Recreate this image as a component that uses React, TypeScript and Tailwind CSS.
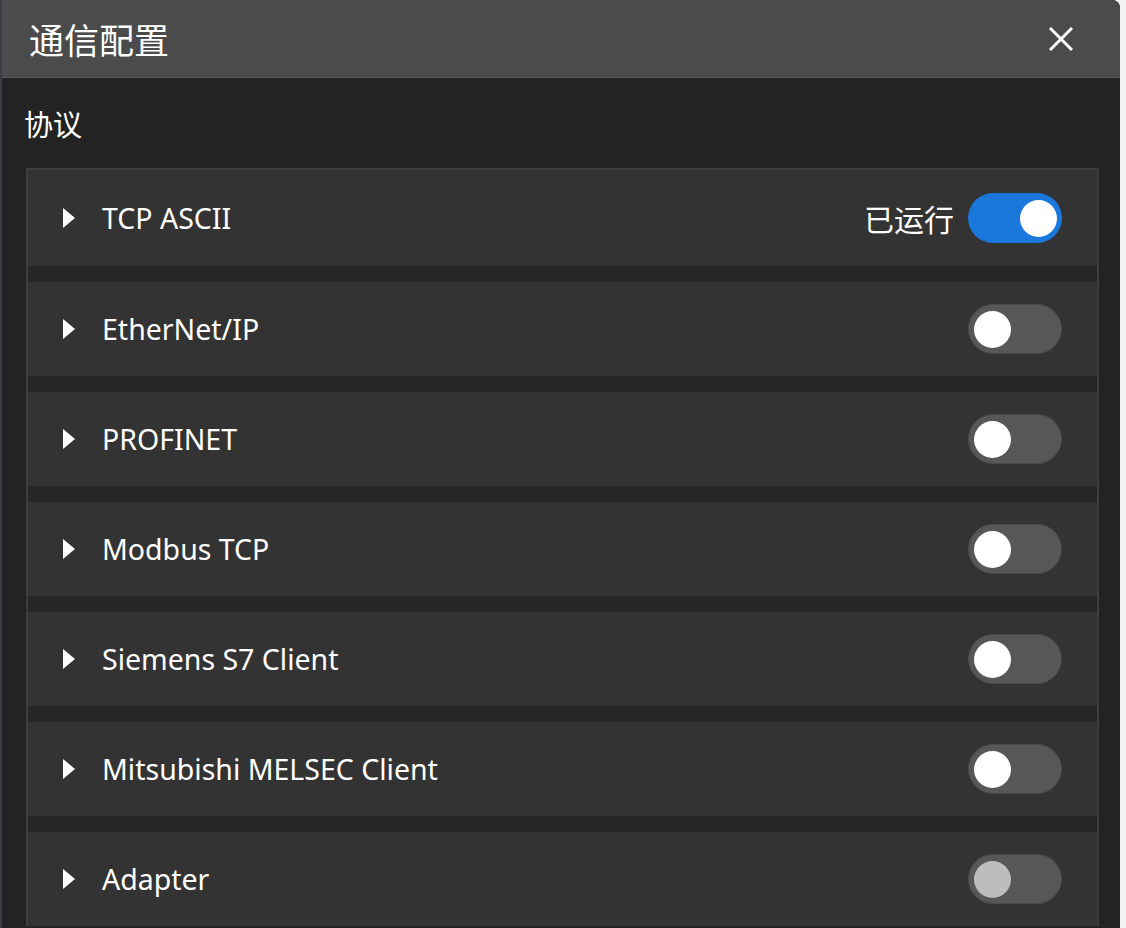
const protocols = [
  { name: "TCP ASCII", on: true },
  { name: "EtherNet/IP", on: false },
  { name: "PROFINET", on: false },
  { name: "Modbus TCP", on: false },
  { name: "Siemens S7 Client", on: false },
  { name: "Mitsubishi MELSEC Client", on: false },
  { name: "Adapter", on: false, disabled: true },
];

function Toggle({ on, disabled }: { on: boolean; disabled?: boolean }) {
  if (on) {
    return (
      <div className="flex h-[50px] w-[94px] items-center justify-end rounded-full bg-[#1a78dc] pr-[5px]">
        <div className="h-[37px] w-[37px] rounded-full bg-white" />
      </div>
    );
  }
  return (
    <div className="flex h-[50px] w-[94px] items-center rounded-full border border-[#4a4a4a] bg-[#575757] pl-[5px]">
      <div className={"h-[37px] w-[37px] rounded-full " + (disabled ? "bg-[#bdbdbd]" : "bg-white")} />
    </div>
  );
}

function Caret() {
  return (
    <svg width="14" height="22" viewBox="0 0 14 22" className="shrink-0">
      <path d="M1 1 L13 11 L1 21 Z" fill="#ffffff" />
    </svg>
  );
}

export default function App() {
  return (
    <div
      className="flex h-[928px] w-[1126px] overflow-hidden bg-[#f2f2f2]"
      style={{ fontFamily: '"Noto Sans", "Noto Sans CJK SC", sans-serif' }}
    >
      <div className="w-[2px] shrink-0 bg-[#3a3d42]" />
      <div className="flex w-[1118px] shrink-0 flex-col overflow-hidden rounded-tr-[8px] bg-[#232323]">
        <header className="flex h-[78px] shrink-0 items-center justify-between border-b border-[#5a5a5a] bg-[#4b4b4b] pl-[27px] pr-[46px]">
          <span className="text-[35px] leading-none text-white" style={{ fontFamily: '"Noto Sans CJK SC", sans-serif' }}>
            通信配置
          </span>
          <svg width="26" height="26" viewBox="0 0 26 26">
            <path d="M2 2 L24 24 M24 2 L2 24" stroke="#ffffff" strokeWidth="3" />
          </svg>
        </header>
        <div className="flex h-[90px] items-center pl-[22px]">
          <span className="text-[29px] leading-none text-white" style={{ fontFamily: '"Noto Sans CJK SC", sans-serif' }}>
            协议
          </span>
        </div>
        <div className="ml-[24px] w-[1073px] border-x-2 border-t-2 border-[#3d3d3d] bg-[#262626]">
          <div className="flex flex-col gap-[16px]">
            {protocols.map((p, i) => (
              <div
                key={p.name}
                className={
                  "flex shrink-0 items-center justify-between bg-[#333333] pl-[34px] pr-[35px] " +
                  (i === 0 ? "h-[96px]" : "h-[94px]")
                }
              >
                <div className="flex items-center gap-[26px]">
                  <Caret />
                  <span className="text-[28.5px] text-white">{p.name}</span>
                </div>
                <div className="flex items-center gap-[14px]">
                  {p.on && (
                    <span className="text-[30px] text-white" style={{ fontFamily: '"Noto Sans CJK SC", sans-serif' }}>
                      已运行
                    </span>
                  )}
                  <Toggle on={p.on} disabled={p.disabled} />
                </div>
              </div>
            ))}
          </div>
        </div>
      </div>
    </div>
  );
}
